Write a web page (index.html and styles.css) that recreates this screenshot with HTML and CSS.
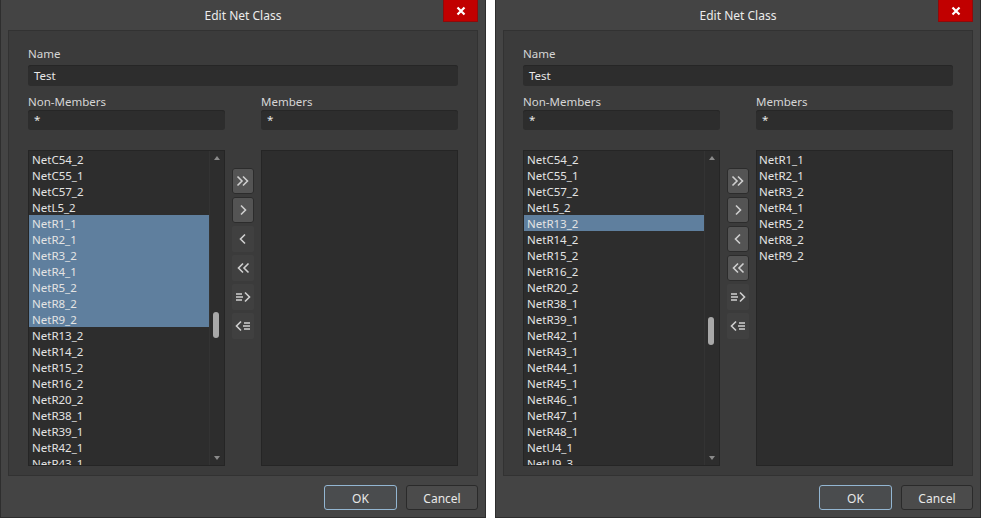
FILE: index.html
```html
<!DOCTYPE html>
<html>
<head>
<meta charset="utf-8">
<link rel="stylesheet" href="styles.css">
</head>
<body>
<div class="dialog">
  <div class="titlebar"><span class="title">Edit Net Class</span><div class="close"><svg width="10" height="10" viewBox="0 0 10 10"><path d="M1.5 1.5 L8.5 8.5 M8.5 1.5 L1.5 8.5" stroke="#fff" stroke-width="2.2"/></svg></div></div>
  <div class="panel">
    <div class="label">Name</div>
    <div class="input name">Test</div>
    <div class="filters">
      <div class="fcol"><div class="label">Non-Members</div><div class="input">*</div></div>
      <div class="fcol"><div class="label">Members</div><div class="input">*</div></div>
    </div>
    <div class="lists">
      <div class="list">
        <div class="items">
          <div class="row">NetC54_2</div><div class="row">NetC55_1</div><div class="row">NetC57_2</div><div class="row">NetL5_2</div>
          <div class="row sel">NetR1_1</div><div class="row sel">NetR2_1</div><div class="row sel">NetR3_2</div><div class="row sel">NetR4_1</div><div class="row sel">NetR5_2</div><div class="row sel">NetR8_2</div><div class="row sel">NetR9_2</div>
          <div class="row">NetR13_2</div><div class="row">NetR14_2</div><div class="row">NetR15_2</div><div class="row">NetR16_2</div><div class="row">NetR20_2</div><div class="row">NetR38_1</div><div class="row">NetR39_1</div><div class="row">NetR42_1</div><div class="row">NetR43_1</div>
        </div>
        <div class="scroll"><div class="arr up"></div><div class="track"><div class="thumb t1"></div></div><div class="arr down"></div></div>
      </div>
      <div class="btns">
        <div class="btn on"><svg viewBox="0 0 22 26"><path d="M5.5 8.5 L10 13 L5.5 17.5 M11 8.5 L15.5 13 L11 17.5"/></svg></div>
        <div class="btn on"><svg viewBox="0 0 22 26"><path d="M9 8.5 L13.5 13 L9 17.5"/></svg></div>
        <div class="btn"><svg viewBox="0 0 22 26"><path d="M13 8.5 L8.5 13 L13 17.5"/></svg></div>
        <div class="btn"><svg viewBox="0 0 22 26"><path d="M11 8.5 L6.5 13 L11 17.5 M16.5 8.5 L12 13 L16.5 17.5"/></svg></div>
        <div class="btn"><svg viewBox="0 0 22 26"><path d="M4 10 H10 M4 13 H11 M4 16 H10 M13 8.5 L17.5 13 L13 17.5"/></svg></div>
        <div class="btn"><svg viewBox="0 0 22 26"><path d="M9 8.5 L4.5 13 L9 17.5 M12 10 H18 M11 13 H18 M12 16 H18"/></svg></div>
      </div>
      <div class="list members"><div class="items"></div></div>
    </div>
  </div>
  <div class="footer"><div class="fbtn ok">OK</div><div class="fbtn">Cancel</div></div>
</div>
<div class="dialog">
  <div class="titlebar"><span class="title">Edit Net Class</span><div class="close"><svg width="10" height="10" viewBox="0 0 10 10"><path d="M1.5 1.5 L8.5 8.5 M8.5 1.5 L1.5 8.5" stroke="#fff" stroke-width="2.2"/></svg></div></div>
  <div class="panel">
    <div class="label">Name</div>
    <div class="input name">Test</div>
    <div class="filters">
      <div class="fcol"><div class="label">Non-Members</div><div class="input">*</div></div>
      <div class="fcol"><div class="label">Members</div><div class="input">*</div></div>
    </div>
    <div class="lists">
      <div class="list">
        <div class="items">
          <div class="row">NetC54_2</div><div class="row">NetC55_1</div><div class="row">NetC57_2</div><div class="row">NetL5_2</div>
          <div class="row sel">NetR13_2</div><div class="row">NetR14_2</div><div class="row">NetR15_2</div><div class="row">NetR16_2</div><div class="row">NetR20_2</div><div class="row">NetR38_1</div><div class="row">NetR39_1</div><div class="row">NetR42_1</div><div class="row">NetR43_1</div><div class="row">NetR44_1</div><div class="row">NetR45_1</div><div class="row">NetR46_1</div><div class="row">NetR47_1</div><div class="row">NetR48_1</div><div class="row">NetU4_1</div><div class="row">NetU9_3</div>
        </div>
        <div class="scroll"><div class="arr up"></div><div class="track"><div class="thumb t2"></div></div><div class="arr down"></div></div>
      </div>
      <div class="btns">
        <div class="btn on"><svg viewBox="0 0 22 26"><path d="M5.5 8.5 L10 13 L5.5 17.5 M11 8.5 L15.5 13 L11 17.5"/></svg></div>
        <div class="btn on"><svg viewBox="0 0 22 26"><path d="M9 8.5 L13.5 13 L9 17.5"/></svg></div>
        <div class="btn on"><svg viewBox="0 0 22 26"><path d="M13 8.5 L8.5 13 L13 17.5"/></svg></div>
        <div class="btn on"><svg viewBox="0 0 22 26"><path d="M11 8.5 L6.5 13 L11 17.5 M16.5 8.5 L12 13 L16.5 17.5"/></svg></div>
        <div class="btn"><svg viewBox="0 0 22 26"><path d="M4 10 H10 M4 13 H11 M4 16 H10 M13 8.5 L17.5 13 L13 17.5"/></svg></div>
        <div class="btn"><svg viewBox="0 0 22 26"><path d="M9 8.5 L4.5 13 L9 17.5 M12 10 H18 M11 13 H18 M12 16 H18"/></svg></div>
      </div>
      <div class="list members">
        <div class="items">
          <div class="row">NetR1_1</div><div class="row">NetR2_1</div><div class="row">NetR3_2</div><div class="row">NetR4_1</div><div class="row">NetR5_2</div><div class="row">NetR8_2</div><div class="row">NetR9_2</div>
        </div>
      </div>
    </div>
  </div>
  <div class="footer"><div class="fbtn ok">OK</div><div class="fbtn">Cancel</div></div>
</div>
</body>
</html>
```
FILE: styles.css
```css
* { box-sizing: border-box; }
html, body { margin: 0; padding: 0; }
body {
  width: 981px; height: 518px; overflow: hidden;
  background: #ffffff;
  display: flex; gap: 9px;
  font-family: "Noto Sans", "Open Sans", sans-serif;
  font-size: 11.5px;
  color: #e2e2e2;
}
.dialog {
  width: 486px; height: 518px;
  background: #444444;
  border-left: 1px solid #2e2e2e;
  border-right: 1px solid #2e2e2e;
  border-bottom: 1px solid #2e2e2e;
  display: flex; flex-direction: column;
}
.titlebar {
  position: relative;
  height: 30px; flex: none;
  display: flex; align-items: center; justify-content: center;
  color: #ececec; font-size: 12px;
}
.title { margin-top: 1px; }
.close {
  position: absolute; top: 0; right: 7px;
  width: 35px; height: 22px;
  background: #c10000;
  border: 1px solid #8f0a0a; border-top: none;
  display: flex; align-items: center; justify-content: center;
}
.panel {
  margin: 0 7px;
  height: 446px; flex: none;
  background: #3b3b3b;
  border: 1px solid #323232;
  padding: 14px 19px 9px 19px;
  display: flex; flex-direction: column;
}
.label { height: 16px; line-height: 16px; padding-top: 1px; color: #d6d6d6; }
.input {
  background: #2d2d2d;
  border-radius: 3px;
  height: 20px; line-height: 20px;
  padding-left: 6px;
  color: #e8e8e8;
  margin-top: 1px;
  box-shadow: inset 0 1px 0 #262626;
}
.input.name { height: 21px; line-height: 21px; margin-top: 4px; }
.filters { display: flex; gap: 36px; margin-top: 7px; }
.fcol { flex: 1; }
.lists { display: flex; margin-top: 20px; height: 316px; }
.list {
  width: 197px; height: 316px;
  background: #2d2d2d;
  border: 1px solid #252525;
  display: flex; overflow: hidden;
}
.items { flex: 1; overflow: hidden; }
.row {
  height: 16px; line-height: 16px;
  padding: 1px 0 0 3px;
  color: #e4e4e4;
  white-space: nowrap;
}
.row.sel { background: #5f7f9e; }
.members .row { padding-left: 2px; }
.scroll {
  width: 15px; flex: none;
  border-left: 1px solid #333;
  display: flex; flex-direction: column; align-items: center;
}
.arr { width: 0; height: 0; margin: 5px 0; }
.arr.up { border-left: 3px solid transparent; border-right: 3px solid transparent; border-bottom: 4px solid #8a8a8a; }
.arr.down { border-left: 3px solid transparent; border-right: 3px solid transparent; border-top: 4px solid #8a8a8a; }
.track { flex: 1; width: 100%; position: relative; }
.thumb {
  position: absolute; left: 3px; width: 6px;
  background: #a8a8a8; border-radius: 3px;
}
.t1 { top: 147px; height: 26px; }
.t2 { top: 152px; height: 28px; }
.btns {
  width: 36px; flex: none;
  display: flex; flex-direction: column; align-items: center;
  gap: 3px; padding-top: 18px;
}
.btn {
  width: 22px; height: 26px;
  background: #404040;
  border-radius: 2px;
}
.btn.on {
  background: #545454;
  box-shadow: inset 0 0 0 1px #2c2c2c;
  border-radius: 3px;
}
.btn svg { width: 22px; height: 26px; display: block; fill: none; stroke: #cfcfcf; stroke-width: 1.6; }
.footer {
  flex: 1;
  display: flex; justify-content: flex-end; align-items: flex-start;
  gap: 9px; padding: 9px 7px 0 0;
  font-size: 12px;
}
.fbtn {
  width: 72px; height: 25px;
  background: #4b4b4b;
  border: 1px solid #2a2a2a;
  border-radius: 3px;
  display: flex; align-items: center; justify-content: center;
  padding-top: 1px;
  color: #e8e8e8;
}
.fbtn.ok { width: 73px; border-color: #93b6d2; background: #4a4c4e; }
```
